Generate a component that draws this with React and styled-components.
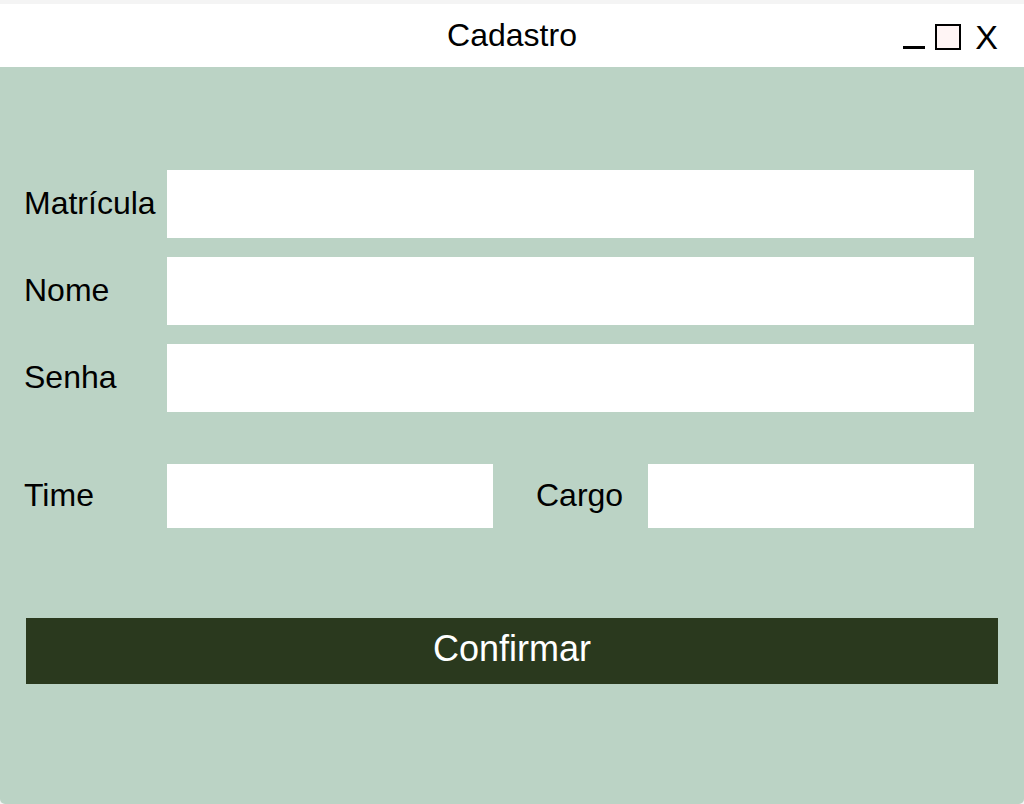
import React from 'react'
import styled, {createGlobalStyle} from 'styled-components'

const GlobalStyle = createGlobalStyle`
  html, body {
    margin: 0;
    padding: 0;
    background: #f4f4f4;
  }
  * {
    box-sizing: border-box;
  }
`

const Window = styled.div`
  margin-top: 4px;
  height: 800px;
  display: flex;
  flex-direction: column;
  font-family: 'Liberation Sans', Arial, sans-serif;
  color: #000;
  border-radius: 0 0 5px 5px;
  overflow: hidden;
`

const TitleBar = styled.header`
  height: 63px;
  flex-shrink: 0;
  background: #fff;
  display: grid;
  grid-template-columns: 1fr auto 1fr;
  align-items: center;
`

const Title = styled.h1`
  grid-column: 2;
  margin: 0;
  font-size: 32px;
  font-weight: 400;
  line-height: 1;
  padding-bottom: 2px;
`

const Controls = styled.div`
  justify-self: end;
  display: flex;
  align-items: center;
  padding-right: 26px;
  height: 100%;
`

const Minimize = styled.span`
  width: 22px;
  height: 3px;
  background: #000;
  margin-top: 23px;
`

const Maximize = styled.span`
  width: 26px;
  height: 26px;
  margin-left: 10px;
  border: 2px solid #000;
  background: #fff5f5;
  margin-top: 2px;
`

const Close = styled.span`
  margin-left: 14px;
  font-size: 34px;
  line-height: 1;
  padding-top: 2px;
`

const Body = styled.main`
  flex: 1;
  background: #bbd3c5;
  padding-top: 103px;
`

const Form = styled.form`
  display: flex;
  flex-direction: column;
  gap: 19px;
  padding: 0 50px 0 24px;
`

const Row = styled.div`
  display: flex;
  align-items: center;
  margin-top: ${({$spaced}) => ($spaced ? '33px' : '0')};
`

const Label = styled.label`
  flex: none;
  width: ${({$width}) => $width}px;
  margin-left: ${({$offset}) => $offset || 0}px;
  font-size: 32px;
  line-height: 1;
  padding-bottom: 3px;
`

const Input = styled.input`
  display: block;
  flex: ${({$width}) => ($width ? 'none' : '1')};
  width: ${({$width}) => ($width ? `${$width}px` : 'auto')};
  min-width: 0;
  height: ${({$height}) => $height}px;
  border: none;
  outline: none;
  background: #fff;
  padding: 0 12px;
  font: inherit;
  font-size: 24px;
`

const Confirm = styled.button`
  display: block;
  width: calc(100% - 52px);
  height: 66px;
  margin: 90px 26px 0;
  padding: 0 0 5px;
  border: none;
  background: #2a391e;
  color: #fff;
  font-family: 'Liberation Sans', Arial, sans-serif;
  font-size: 36px;
  cursor: pointer;
`

const fields = ['Matrícula', 'Nome', 'Senha']

const App = () => {
  return (
    <>
      <GlobalStyle />
      <Window>
        <TitleBar>
          <Title>Cadastro</Title>
          <Controls>
            <Minimize />
            <Maximize />
            <Close>X</Close>
          </Controls>
        </TitleBar>
        <Body>
          <Form onSubmit={(e) => e.preventDefault()}>
            {fields.map((f) => (
              <Row key={f}>
                <Label $width={143}>{f}</Label>
                <Input $height={68} type={f === 'Senha' ? 'password' : 'text'} />
              </Row>
            ))}
            <Row $spaced>
              <Label $width={143}>Time</Label>
              <Input $height={64} $width={326} />
              <Label $width={112} $offset={43}>Cargo</Label>
              <Input $height={64} $width={326} />
            </Row>
          </Form>
          <Confirm type="button">Confirmar</Confirm>
        </Body>
      </Window>
    </>
  )
}

export default App
